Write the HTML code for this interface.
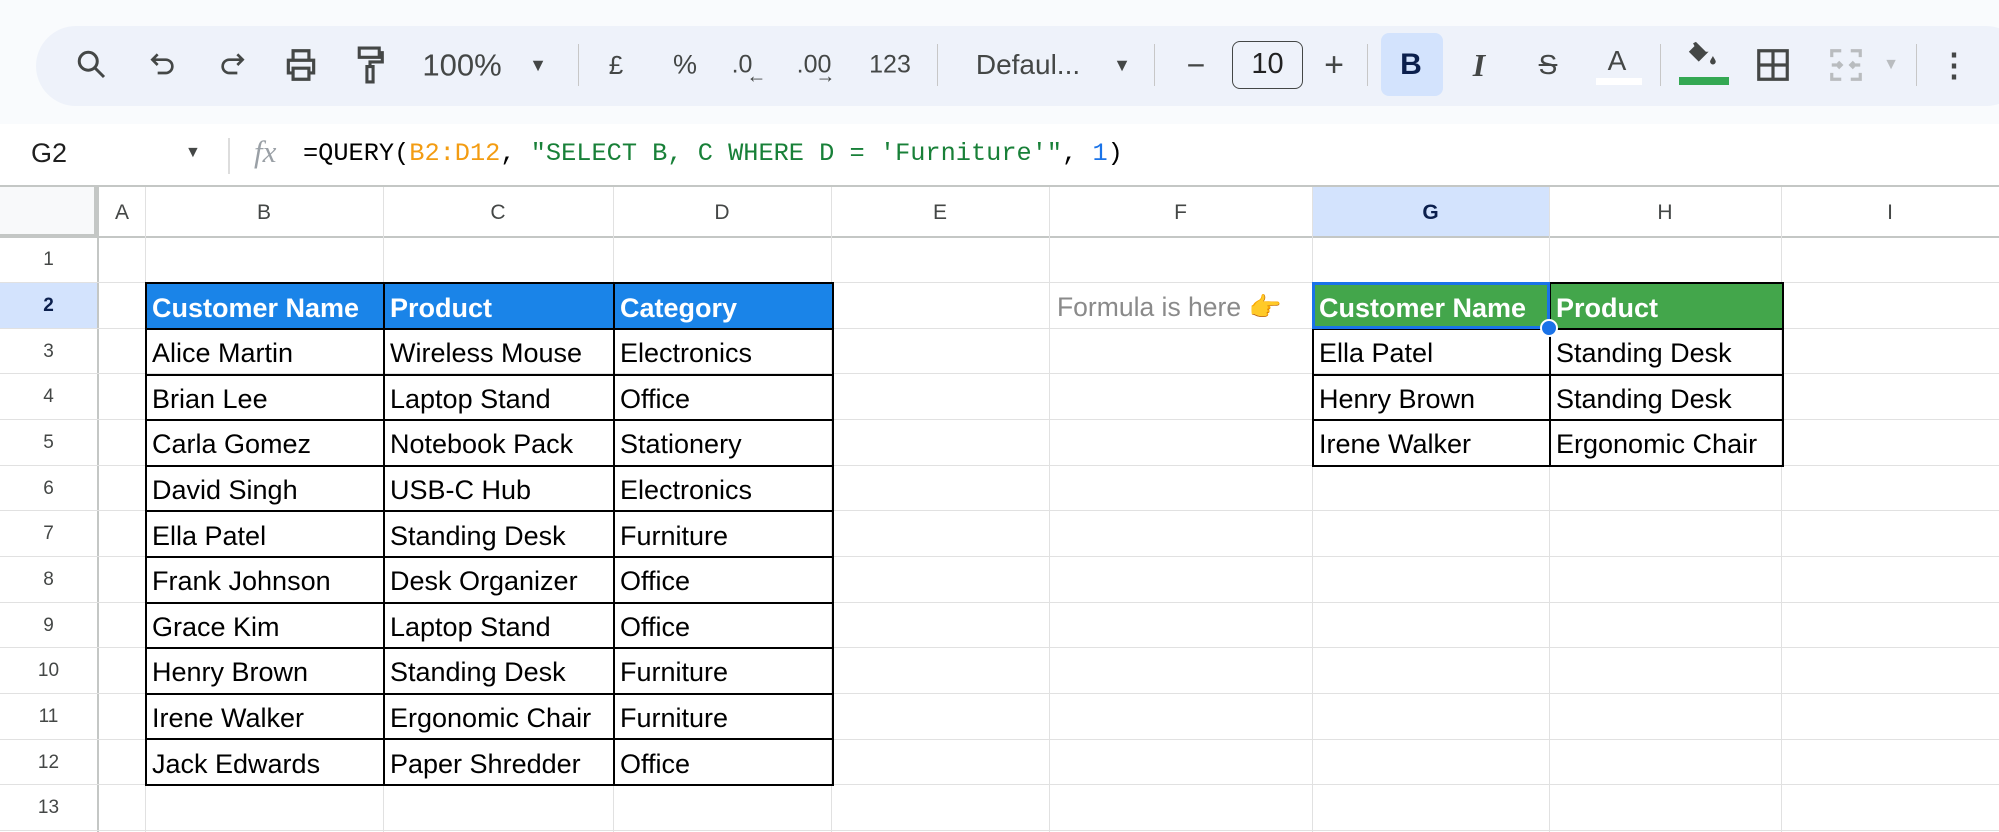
<!DOCTYPE html>
<html><head><meta charset="utf-8"><style>
*{margin:0;padding:0;box-sizing:border-box}
body{width:1999px;height:832px;overflow:hidden;background:#fff;font-family:"Liberation Sans",Arial,sans-serif;position:relative}
.abs{position:absolute}
.tb{left:36px;top:26px;width:1990px;height:80px;background:#eef2fa;border-radius:40px}
.ic{position:absolute;top:65px;transform:translate(-50%,-50%);color:#444746;font-size:26px;line-height:1}
.sep{position:absolute;top:44px;width:1px;height:42px;background:#c7c7c7}
.vl{position:absolute;width:1px;background:#e1e1e1}
.hl{position:absolute;height:1px;background:#e1e1e1}
.ch{position:absolute;top:189px;height:47px;line-height:47px;text-align:center;font-size:21px;color:#444746}
.rh{position:absolute;left:0;width:97px;text-align:center;font-size:19px;color:#444746}
table{position:absolute;border-collapse:collapse;table-layout:fixed}
td{border:2px solid #000;font-size:27px;padding:4px 5px 0;white-space:nowrap;overflow:hidden;color:#000;vertical-align:middle}
th{border:2px solid #000;font-size:27px;padding:4px 5px 0;text-align:left;color:#fff;font-weight:bold;white-space:nowrap;overflow:hidden}
</style></head><body>
<div class="abs" style="left:0;top:0;width:1999px;height:124px;background:#f9fbfd"></div>
<div class="abs tb"></div>
<svg class="abs" style="left:74px;top:47px" width="36" height="36" viewBox="0 0 24 24" fill="none" stroke="#444746" stroke-width="2"><circle cx="9.5" cy="9.5" r="6"/><path d="M14 14l6 6"/></svg>
<svg class="abs" style="left:147px;top:49px" width="32" height="32" viewBox="0 0 24 24" fill="none" stroke="#444746" stroke-width="2"><path d="M8 4L4 8l4 4M4 8h10a5 5 0 010 10H8"/></svg>
<svg class="abs" style="left:216px;top:49px" width="32" height="32" viewBox="0 0 24 24" fill="none" stroke="#444746" stroke-width="2"><path d="M16 4l4 4-4 4M20 8H10a5 5 0 000 10h6"/></svg>
<svg class="abs" style="left:282px;top:46px" width="38" height="38" viewBox="0 0 24 24" fill="none" stroke="#444746" stroke-width="2"><path d="M7 8V3h10v5M7 17H4v-8h16v8h-3M7 14h10v7H7z"/></svg>
<svg class="abs" style="left:354px;top:45px" width="32" height="40" viewBox="0 0 20 26" fill="none" stroke="#444746" stroke-width="2"><path d="M3 2h13v6H3zM16 5h2v6h-8v3M8 14h4v10H8z"/></svg>
<div class="ic" style="left:462px;font-size:31px">100%</div>
<div class="ic" style="left:538px;font-size:18px">▼</div>
<div class="sep" style="left:578px"></div>
<div class="ic" style="left:616px;font-size:26px">£</div>
<div class="ic" style="left:685px;font-size:27px">%</div>
<div class="ic" style="left:752px;font-size:25px">.0<span style="font-size:20px;position:relative;top:10px;left:-6px">←</span></div>
<div class="ic" style="left:824px;font-size:25px">.00<span style="font-size:20px;position:relative;top:10px;left:-16px">→</span></div>
<div class="ic" style="left:890px;font-size:25px">123</div>
<div class="sep" style="left:937px"></div>
<div class="ic" style="left:1028px;font-size:28px">Defaul...</div>
<div class="ic" style="left:1122px;font-size:18px">▼</div>
<div class="sep" style="left:1154px"></div>
<div class="ic" style="left:1196px;font-size:32px">−</div>
<div class="abs" style="left:1232px;top:41px;width:71px;height:48px;border:1.5px solid #444746;border-radius:8px;text-align:center;line-height:45px;font-size:29px;color:#222">10</div>
<div class="ic" style="left:1334px;font-size:34px">+</div>
<div class="sep" style="left:1367px"></div>
<div class="abs" style="left:1381px;top:33px;width:62px;height:63px;background:#d3e3fd;border-radius:8px"></div>
<div class="ic" style="left:1411px;font-weight:bold;color:#0b1f4d;font-size:30px">B</div>
<div class="ic" style="left:1479px;font-style:italic;font-size:32px;font-family:'Liberation Serif',serif;font-weight:bold">I</div>
<div class="ic" style="left:1548px;font-size:28px;text-decoration:line-through">S</div>
<div class="ic" style="left:1617px;font-size:28px;top:61px">A</div>
<div class="abs" style="left:1596px;top:78px;width:46px;height:7px;background:#fff"></div>
<div class="sep" style="left:1660px"></div>
<svg class="abs" style="left:1686px;top:40px" width="34" height="32" viewBox="0 0 24 22" fill="#444746"><path d="M5 2l2-1 8 8-6 6-7-7 4-4zM6 8h10l-7 6z"/><path d="M19 11c1 2 2 3 2 4a2 2 0 01-4 0c0-1 1-2 2-4z"/></svg>
<div class="abs" style="left:1679px;top:77px;width:50px;height:8px;background:#34a853"></div>
<svg class="abs" style="left:1754px;top:46px" width="38" height="38" viewBox="0 0 24 24" fill="none" stroke="#444746" stroke-width="2"><path d="M3 3h18v18H3zM12 3v18M3 12h18"/></svg>
<svg class="abs" style="left:1827px;top:46px" width="38" height="38" viewBox="0 0 24 24" fill="none" stroke="#b9bcbf" stroke-width="2"><path d="M3 7V3h6M15 3h6v4M3 17v4h6M15 21h6v-4M3 12h6M7 10l2 2-2 2M21 12h-6M17 10l-2 2 2 2"/></svg>
<div class="ic" style="left:1891px;font-size:16px;color:#b9bcbf">▼</div>
<div class="sep" style="left:1916px"></div>
<div class="ic" style="left:1954px;font-size:32px;font-weight:bold">⋮</div>
<div class="abs" style="left:0;top:124px;width:1999px;height:62px;background:#fff"></div>
<div class="abs" style="left:31px;top:138px;font-size:27px;color:#1f1f1f">G2</div>
<div class="abs" style="left:185px;top:144px;font-size:16px;color:#444746">▼</div>
<div class="abs" style="left:228px;top:138px;width:2px;height:36px;background:#ddd"></div>
<div class="abs" style="left:254px;top:134px;font-size:31px;color:#9aa0a6;font-style:italic;font-family:'Liberation Serif',serif">fx</div>
<div class="abs" style="left:303px;top:139px;font-family:'Liberation Mono',monospace;font-size:25.3px;color:#000;white-space:pre">=QUERY(<span style="color:#f39c12">B2:D12</span>, <span style="color:#188038">"SELECT B, C WHERE D = 'Furniture'"</span>, <span style="color:#1a73e8">1</span>)</div>
<div class="abs" style="left:0;top:185px;width:1999px;height:2px;background:#c4c7c5"></div>
<div class="abs" style="left:0;top:187px;width:94px;height:47px;background:#f8f9fa"></div>
<div class="abs" style="left:94px;top:187px;width:5px;height:50px;background:#c4c7c5"></div>
<div class="abs" style="left:0;top:234px;width:99px;height:4px;background:#c4c7c5"></div>
<div class="abs" style="left:99px;top:236px;width:1900px;height:2px;background:#c4c7c5"></div>
<div class="abs" style="left:1312px;top:187px;width:237px;height:49px;background:#d3e3fd"></div>
<div class="abs" style="left:0;top:282px;width:97px;height:46px;background:#d3e3fd"></div>
<div class="abs" style="left:97px;top:187px;width:2px;height:645px;background:#c4c7c5"></div>
<div class="ch" style="left:99px;width:46px">A</div>
<div class="ch" style="left:145px;width:238px">B</div>
<div class="ch" style="left:383px;width:230px">C</div>
<div class="ch" style="left:613px;width:218px">D</div>
<div class="ch" style="left:831px;width:218px">E</div>
<div class="ch" style="left:1049px;width:263px">F</div>
<div class="ch" style="left:1312px;width:237px;color:#0b1f4d;font-weight:bold">G</div>
<div class="ch" style="left:1549px;width:232px">H</div>
<div class="ch" style="left:1781px;width:218px">I</div>
<div class="vl" style="left:145px;top:187px;height:645px"></div>
<div class="vl" style="left:383px;top:187px;height:645px"></div>
<div class="vl" style="left:613px;top:187px;height:645px"></div>
<div class="vl" style="left:831px;top:187px;height:645px"></div>
<div class="vl" style="left:1049px;top:187px;height:645px"></div>
<div class="vl" style="left:1312px;top:187px;height:645px"></div>
<div class="vl" style="left:1549px;top:187px;height:645px"></div>
<div class="vl" style="left:1781px;top:187px;height:645px"></div>
<div class="hl" style="left:0;top:282px;width:1999px"></div>
<div class="hl" style="left:0;top:328px;width:1999px"></div>
<div class="hl" style="left:0;top:373px;width:1999px"></div>
<div class="hl" style="left:0;top:419px;width:1999px"></div>
<div class="hl" style="left:0;top:465px;width:1999px"></div>
<div class="hl" style="left:0;top:510px;width:1999px"></div>
<div class="hl" style="left:0;top:556px;width:1999px"></div>
<div class="hl" style="left:0;top:602px;width:1999px"></div>
<div class="hl" style="left:0;top:647px;width:1999px"></div>
<div class="hl" style="left:0;top:693px;width:1999px"></div>
<div class="hl" style="left:0;top:739px;width:1999px"></div>
<div class="hl" style="left:0;top:784px;width:1999px"></div>
<div class="hl" style="left:0;top:830px;width:1999px"></div>
<div class="rh" style="top:249px">1</div>
<div class="rh" style="top:295px;font-weight:bold;color:#0b1f4d">2</div>
<div class="rh" style="top:341px">3</div>
<div class="rh" style="top:386px">4</div>
<div class="rh" style="top:432px">5</div>
<div class="rh" style="top:478px">6</div>
<div class="rh" style="top:523px">7</div>
<div class="rh" style="top:569px">8</div>
<div class="rh" style="top:615px">9</div>
<div class="rh" style="top:660px">10</div>
<div class="rh" style="top:706px">11</div>
<div class="rh" style="top:752px">12</div>
<div class="rh" style="top:797px">13</div>
<table style="left:145px;top:282px;width:687px">
<colgroup><col style="width:238px"><col style="width:230px"><col style="width:219px"></colgroup>
<tr style="height:46px;background:#1a84e8"><th>Customer Name</th><th>Product</th><th>Category</th></tr>
<tr style="height:45.6px"><td>Alice Martin</td><td>Wireless Mouse</td><td>Electronics</td></tr>
<tr style="height:45.6px"><td>Brian Lee</td><td>Laptop Stand</td><td>Office</td></tr>
<tr style="height:45.6px"><td>Carla Gomez</td><td>Notebook Pack</td><td>Stationery</td></tr>
<tr style="height:45.6px"><td>David Singh</td><td>USB-C Hub</td><td>Electronics</td></tr>
<tr style="height:45.6px"><td>Ella Patel</td><td>Standing Desk</td><td>Furniture</td></tr>
<tr style="height:45.6px"><td>Frank Johnson</td><td>Desk Organizer</td><td>Office</td></tr>
<tr style="height:45.6px"><td>Grace Kim</td><td>Laptop Stand</td><td>Office</td></tr>
<tr style="height:45.6px"><td>Henry Brown</td><td>Standing Desk</td><td>Furniture</td></tr>
<tr style="height:45.6px"><td>Irene Walker</td><td>Ergonomic Chair</td><td>Furniture</td></tr>
<tr style="height:45.6px"><td>Jack Edwards</td><td>Paper Shredder</td><td>Office</td></tr>
</table>
<div class="abs" style="left:1057px;top:292px;font-size:26.5px;color:#8a8a8a">Formula is here <span style="color:#f4b400">👉</span></div>
<table style="left:1312px;top:282px;width:470px">
<colgroup><col style="width:237px"><col style="width:233px"></colgroup>
<tr style="height:46px;background:#43a64b"><th>Customer Name</th><th>Product</th></tr>
<tr style="height:45.6px"><td>Ella Patel</td><td>Standing Desk</td></tr>
<tr style="height:45.6px"><td>Henry Brown</td><td>Standing Desk</td></tr>
<tr style="height:45.6px"><td>Irene Walker</td><td>Ergonomic Chair</td></tr>
</table>
<div class="abs" style="left:1312px;top:282px;width:238px;height:47px;border:3px solid #1a73e8"></div>
<div class="abs" style="left:1540px;top:319px;width:18px;height:18px;border-radius:50%;background:#1a73e8;border:2px solid #fff"></div>
</body></html>
